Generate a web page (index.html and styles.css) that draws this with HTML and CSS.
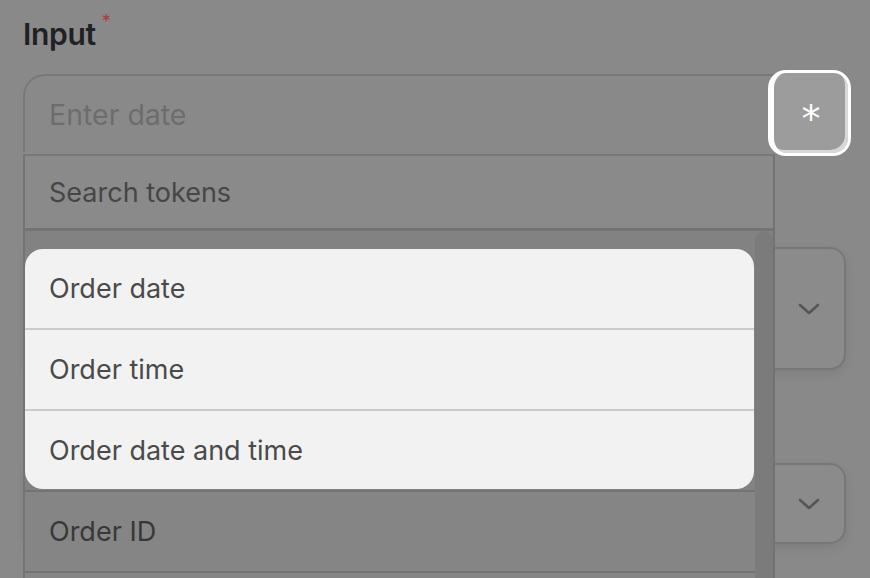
FILE: index.html
```html
<!DOCTYPE html>
<html>
<head>
<meta charset="utf-8">
<link rel="stylesheet" href="styles.css">
</head>
<body>
<div class="page">
  <div class="label">Input<span class="req">*</span></div>
  <div class="field-row">
    <div class="input"><span class="placeholder">Enter date</span></div>
    <button class="token-btn">*</button>
  </div>
  <div class="select select-tall">
    <svg class="chev" width="22" height="12" viewBox="0 0 22 12"><path d="M2 2 L11 10 L20 2" fill="none" stroke="#555" stroke-width="2.6" stroke-linecap="round" stroke-linejoin="round"/></svg>
  </div>
  <div class="select select-short">
    <svg class="chev" width="22" height="12" viewBox="0 0 22 12"><path d="M2 2 L11 10 L20 2" fill="none" stroke="#555" stroke-width="2.6" stroke-linecap="round" stroke-linejoin="round"/></svg>
  </div>

  <div class="dropdown">
    <div class="dd-row search">Search tokens</div>
    <div class="dd-block"></div>
    <div class="dd-row">Order ID</div>
    <div class="dd-row"></div>
    <div class="scrollbar"></div>
  </div>

  <div class="popover">
    <div class="pop-row">Order date</div>
    <div class="pop-row">Order time</div>
    <div class="pop-row">Order date and time</div>
  </div>
</div>
</body>
</html>
```

FILE: styles.css
```css
* { box-sizing: border-box; }
html, body {
  margin: 0;
  padding: 0;
  width: 870px;
  height: 578px;
  overflow: hidden;
  background: #898989;
  font-family: Inter, "Noto Sans", sans-serif;
}
.page {
  position: relative;
  height: 578px;
  padding: 16px 0 0 23px;
}
.label {
  font-size: 30px;
  font-weight: 600;
  line-height: 36px;
  color: #1f2124;
  letter-spacing: -0.3px;
}
.req {
  color: #a8403c;
  font-size: 18px;
  font-weight: 400;
  vertical-align: top;
  position: relative;
  top: -12px;
  margin-left: 6px;
}
.field-row {
  display: flex;
  align-items: center;
  margin-top: 18px;
}
.input {
  width: 752px;
  height: 78px;
  border: 2px solid #787878;
  border-bottom: none;
  border-right: none;
  border-top-left-radius: 22px;
  display: flex;
  align-items: center;
  padding-left: 24px;
}
.placeholder {
  font-size: 28.5px;
  color: #6d6d6d;
}
.token-btn {
  width: 83px;
  height: 86px;
  margin-left: -7px;
  border: 3px solid #ffffff;
  border-left-width: 6px;
  border-radius: 18px;
  background: #9c9c9c;
  box-shadow: inset -3px -3px 0 #d8d8d8;
  color: #ffffff;
  font-family: "DejaVu Sans", sans-serif;
  font-size: 38px;
  line-height: 1;
  padding: 12px 0 0 0;
  display: flex;
  justify-content: center;
  align-items: center;
}
.select {
  width: 823px;
  border: 2px solid #777777;
  border-radius: 16px;
  background: #8b8b8b;
  box-shadow: 0 4px 10px rgba(0,0,0,0.08);
  display: flex;
  justify-content: flex-end;
  align-items: center;
  padding-right: 24px;
}
.select-tall {
  height: 123px;
  margin-top: 91px;
}
.select-short {
  height: 81px;
  margin-top: 93px;
}
.dropdown {
  position: absolute;
  left: 23px;
  top: 154px;
  width: 752px;
  bottom: 0;
  border-left: 2px solid #747474;
  border-right: 2px solid #727272;
  border-top: 2px solid #787878;
  background: #888888;
  overflow: hidden;
}
.dd-row {
  height: 81px;
  border-bottom: 2px solid #737373;
  display: flex;
  align-items: center;
  padding-left: 24px;
  font-size: 27px;
  color: #383838;
  background: #858585;
}
.dd-row.search {
  height: 75px;
  color: #464646;
  background: #8a8a8a;
  border-bottom-width: 3px;
}
.dd-block {
  height: 261px;
  background: #828282;
  border-bottom: 2px solid #737373;
}
.scrollbar {
  position: absolute;
  right: 0;
  top: 75px;
  bottom: 0;
  width: 18px;
  border-radius: 9px 9px 0 0;
  background: #7b7b7b;
}
.popover {
  position: absolute;
  left: 25px;
  top: 249px;
  width: 729px;
  background: #f2f2f2;
  border-radius: 18px;
  overflow: hidden;
}
.pop-row {
  height: 81px;
  display: flex;
  align-items: center;
  padding-left: 24px;
  font-size: 27px;
  color: #4a4a4a;
  border-bottom: 2px solid #cbcbcb;
}
.pop-row:last-child {
  border-bottom: none;
  height: 78px;
}
```
